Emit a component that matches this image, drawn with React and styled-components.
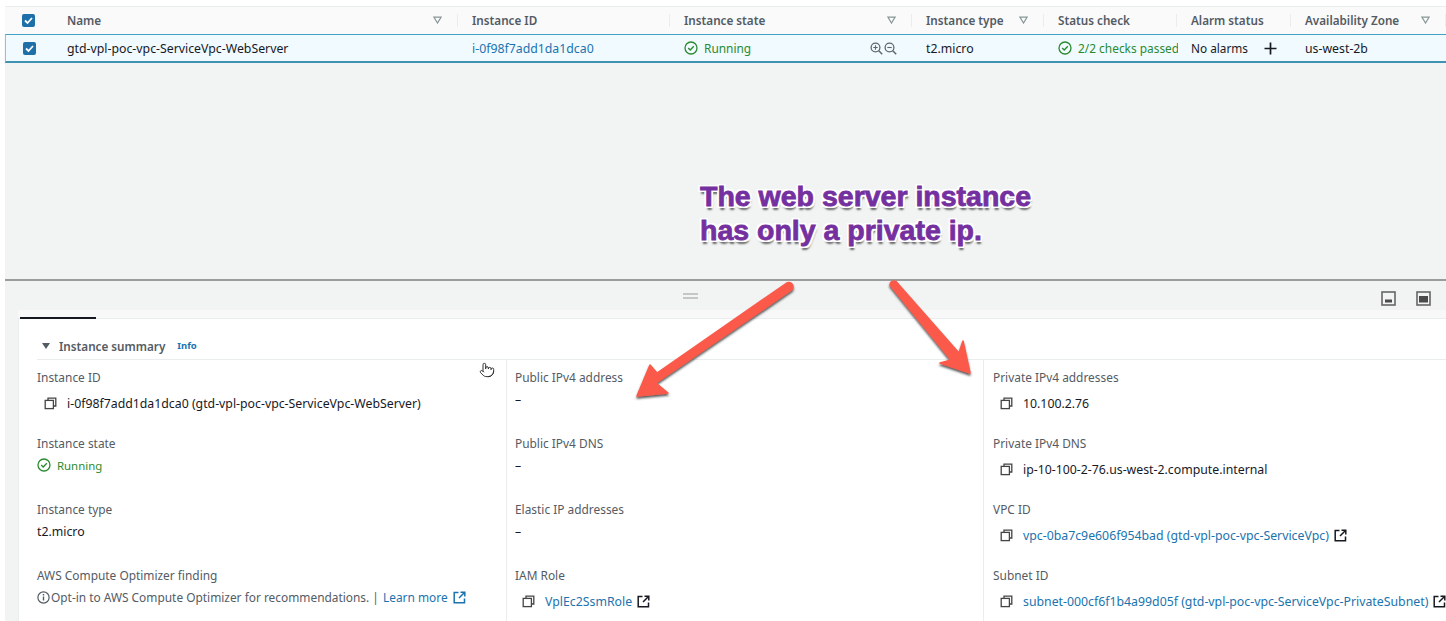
import React from 'react';
import styled, { createGlobalStyle } from 'styled-components';
import { Pointer } from 'lucide-react';

const GlobalStyle = createGlobalStyle`
  html, body { margin: 0; padding: 0; background: #fff; }
  body { font-family: "Noto Sans", "Open Sans", sans-serif; font-size: 12.3px; color: #16191f; }
`;

const Page = styled.div`
  position: relative;
  width: 1446px;
  height: 621px;
  overflow: hidden;
  padding: 6px 0 0 5px;
  box-sizing: border-box;
  display: flex;
  flex-direction: column;
  background: #fff;
`;

const columns = '48px 405px 212px 242px 132px 133px 114px 155px';

const HeaderRow = styled.div`
  display: grid;
  grid-template-columns: ${columns};
  height: 28px;
  padding-bottom: 1px;
  align-items: center;
  background: #fafafa;
  border-top: 1px solid #eaeded;
  box-sizing: border-box;
`;

const HeadCell = styled.div`
  position: relative;
  height: 100%;
  display: flex;
  align-items: center;
  justify-content: space-between;
  padding: 0 16px 0 14px;
  box-sizing: border-box;
  font-size: 11.7px;
  font-weight: 600;
  color: #545b64;
  white-space: nowrap;
  &:after {
    content: '';
    position: absolute;
    right: 0;
    top: 7px;
    height: 13px;
    border-right: 1px solid #eaeded;
  }
`;

const SelectedRow = styled.div`
  display: grid;
  grid-template-columns: ${columns};
  height: 29px;
  align-items: center;
  background: #f1faff;
  border-top: 1px solid #44a1c4;
  border-bottom: 2px solid #3f93b2;
  border-left: 1px solid #8fc4d8;
  box-sizing: border-box;
  box-shadow: 0 1px 1px #c7cccc;
`;

const Cell = styled.div`
  display: flex;
  align-items: center;
  justify-content: space-between;
  padding: 0 14px 0 13px;
  box-sizing: border-box;
  white-space: nowrap;
  overflow: hidden;
  gap: 4px;
`;

const CheckCell = styled(Cell)`
  padding: 0 0 0 17px;
  justify-content: flex-start;
`;

const AlarmCell = styled(Cell)`
  font-size: 11.8px;
  padding-right: 15px;
`;

const Check = styled.span`
  width: 13px;
  height: 13px;
  border-radius: 2px;
  background: #1f6fa8;
  display: flex;
  align-items: center;
  justify-content: center;
`;

const Link = styled.span`
  color: #1a73ae;
  white-space: nowrap;
`;

const Status = styled.span`
  display: inline-flex;
  align-items: center;
  gap: 6px;
  font-size: 11.9px;
  color: #2a8a2f;
  white-space: nowrap;
`;

const DetailStatus = styled(Status)`
  font-size: 11.4px;
`;

const ZoomGroup = styled.span`
  display: flex;
  gap: 1px;
  margin-right: 2px;
`;

const Gap = styled.div`
  height: 216px;
  background: #f2f3f3;
`;

const SplitPanel = styled.div`
  flex: 1;
  display: flex;
  flex-direction: column;
  background: #f2f3f3;
  border-top: 2px solid #9a9c9e;
  min-height: 0;
`;

const SplitBar = styled.div`
  height: 37px;
  flex: none;
  display: flex;
  align-items: flex-start;
  position: relative;
  padding: 10px 15px 0 0;
  box-sizing: border-box;
  justify-content: flex-end;
  gap: 20px;
`;

const Handle = styled.span`
  position: absolute;
  left: 678px;
  top: 12px;
  width: 15px;
  height: 6px;
  border-top: 2px solid #c4c6c8;
  border-bottom: 2px solid #c4c6c8;
  box-sizing: border-box;
`;

const Card = styled.div`
  flex: 1;
  margin-left: 13px;
  background: #fff;
  border-left: 1px solid #eaeded;
  border-top: 1px solid #eaeded;
  box-shadow: 0 -8px 0 #f8f8f8;
  position: relative;
`;

const TabMark = styled.div`
  position: absolute;
  left: 1px;
  top: -2px;
  width: 76px;
  height: 2px;
  background: #16191f;
`;

const SectionHead = styled.div`
  display: flex;
  align-items: center;
  height: 41px;
  margin-left: 18px;
  padding: 13px 0 0 5px;
  box-sizing: border-box;
  gap: 9px;
  border-bottom: 1px solid #eaeded;
  font-size: 11.7px;
  font-weight: 600;
  color: #545b64;
`;

const Caret = styled.span`
  width: 0;
  height: 0;
  border-left: 4px solid transparent;
  border-right: 4px solid transparent;
  border-top: 6px solid #545b64;
  margin-top: 1px;
`;

const InfoLink = styled.span`
  font-size: 9.5px;
  font-weight: 700;
  color: #1a73ae;
  margin-left: 3px;
`;

const Columns = styled.div`
  display: grid;
  grid-template-columns: 487px 477px 1fr;
`;

const Column = styled.div`
  position: relative;
  padding: 8px 0 0 ${(p) => p.$pad}px;
  border-left: ${(p) => (p.$first ? 'none' : '1px solid #eaeded')};
  height: 270px;
  box-sizing: border-box;
`;

const Field = styled.div`
  height: 66px;
`;

const Label = styled.div`
  height: 18px;
  line-height: 18px;
  font-size: 11.9px;
  color: #545b64;
`;

const Value = styled.div`
  display: flex;
  align-items: center;
  height: 22px;
  margin-top: ${(p) => (p.$copy ? 6 : 2)}px;
  padding-left: ${(p) => (p.$copy ? 7 : 0)}px;
  white-space: nowrap;
  gap: 5px;
  color: #16191f;
`;

const OptIn = styled(Value)`
  gap: 1px;
  font-size: 11.9px;
  color: #545b64;
`;

const CopySvg = styled.svg`
  flex: none;
  margin-right: 5px;
`;

const HandCursor = styled.div`
  position: absolute;
  left: 460px;
  top: 2px;
  color: #333;
`;

const Note = styled.div`
  position: absolute;
  left: 700px;
  top: 179px;
  font-family: "Liberation Sans", Arial, sans-serif;
  font-weight: 700;
  font-size: 28.5px;
  line-height: 34px;
  color: #7530a0;
  white-space: nowrap;
  -webkit-text-stroke: 0.8px #7530a0;
  text-shadow:
    -1px -1px 0 #fff, 1px -1px 0 #fff, -1px 1px 0 #fff, 1px 1px 0 #fff,
    0 -2px 0 #fff, 0 2px 0 #fff, -2px 0 0 #fff, 2px 0 0 #fff,
    2px 2px 0 #fff, -2px 2px 0 #fff, 2px -2px 0 #fff, -2px -2px 0 #fff,
    1px 4px 2px #666;
`;

const Arrows = styled.svg`
  position: absolute;
  left: 0;
  top: 0;
  pointer-events: none;
`;

const Sort = () => (
  <svg width="9" height="8" viewBox="0 0 9 8" style={{ flex: 'none' }}>
    <path d="M1 1.2h7L4.5 7z" fill="none" stroke="#879596" strokeWidth="1.2" />
  </svg>
);

const CheckBox = () => (
  <Check>
    <svg width="11" height="11" viewBox="0 0 11 11">
      <path d="M2 5.5l2.5 2.5L9 3" fill="none" stroke="#fff" strokeWidth="1.8" />
    </svg>
  </Check>
);

const OkIcon = () => (
  <svg width="14" height="14" viewBox="0 0 14 14" style={{ flex: 'none' }}>
    <circle cx="7" cy="7" r="6" fill="none" stroke="#2a8a2f" strokeWidth="1.3" />
    <path d="M4.2 7l2 2 3.6-3.8" fill="none" stroke="#2a8a2f" strokeWidth="1.3" />
  </svg>
);

const Copy = () => (
  <CopySvg width="13" height="13" viewBox="0 0 13 13">
    <path d="M4 3V1.2h7.8V9H10" fill="none" stroke="#444" strokeWidth="1.3" />
    <rect x="1.2" y="3.4" width="8.2" height="8.2" fill="none" stroke="#444" strokeWidth="1.3" />
  </CopySvg>
);

const External = ({ color = '#16191f' }) => (
  <svg width="13" height="13" viewBox="0 0 13 13" style={{ flex: 'none' }}>
    <path d="M5.5 1.5H1.2v10.3h10.3V7.5" fill="none" stroke={color} strokeWidth="1.5" />
    <path d="M7.5 1.2h4.3v4.3M11.5 1.5L6 7" fill="none" stroke={color} strokeWidth="1.5" />
  </svg>
);

const Zoom = ({ plus }) => (
  <svg width="13" height="13" viewBox="0 0 13 13">
    <circle cx="5.5" cy="5.5" r="4.4" fill="none" stroke="#5f666d" strokeWidth="1.3" />
    <path d="M8.8 8.8L12.2 12.2" stroke="#5f666d" strokeWidth="1.5" />
    <path d={plus ? 'M3.3 5.5h4.4M5.5 3.3v4.4' : 'M3.3 5.5h4.4'} stroke="#5f666d" strokeWidth="1.1" />
  </svg>
);

const PanelIcon = ({ tall }) => (
  <svg width="15" height="15" viewBox="0 0 15 15">
    <rect x="1" y="1" width="13" height="13" fill="none" stroke="#666" strokeWidth="1.6" />
    <rect x={tall ? 3 : 4} y={tall ? 5 : 8.5} width={tall ? 9 : 7} height={tall ? 6.5 : 3} fill="#4a4a4a" />
  </svg>
);

const InfoIcon = () => (
  <svg width="13" height="13" viewBox="0 0 13 13" style={{ flex: 'none' }}>
    <circle cx="6.5" cy="6.5" r="5.6" fill="none" stroke="#545b64" strokeWidth="1.2" />
    <path d="M6.5 5.5v4M6.5 3v1.4" stroke="#545b64" strokeWidth="1.4" />
  </svg>
);

const Arrow = ({ d }) => (
  <path d={d} fill="#fb5a4b" stroke="#fb5a4b" strokeWidth="1.5" strokeLinejoin="round" />
);

const App = () => (
  <Page>
    <GlobalStyle />
    <HeaderRow>
      <CheckCell><CheckBox /></CheckCell>
      <HeadCell>Name<Sort /></HeadCell>
      <HeadCell>Instance ID</HeadCell>
      <HeadCell>Instance state<Sort /></HeadCell>
      <HeadCell>Instance type<Sort /></HeadCell>
      <HeadCell>Status check</HeadCell>
      <HeadCell>Alarm status</HeadCell>
      <HeadCell>Availability Zone<Sort /></HeadCell>
    </HeaderRow>
    <SelectedRow>
      <CheckCell><CheckBox /></CheckCell>
      <Cell>gtd-vpl-poc-vpc-ServiceVpc-WebServer</Cell>
      <Cell><Link>i-0f98f7add1da1dca0</Link></Cell>
      <Cell>
        <Status><OkIcon />Running</Status>
        <ZoomGroup><Zoom plus /><Zoom /></ZoomGroup>
      </Cell>
      <Cell>t2.micro</Cell>
      <Cell><Status><OkIcon />2/2 checks passed</Status></Cell>
      <AlarmCell>
        No alarms
        <svg width="13" height="13" viewBox="0 0 13 13" style={{ flex: 'none' }}>
          <path d="M6.5 0.5v12M0.5 6.5h12" stroke="#16191f" strokeWidth="1.7" />
        </svg>
      </AlarmCell>
      <Cell>us-west-2b</Cell>
    </SelectedRow>
    <Gap />
    <SplitPanel>
      <SplitBar>
        <Handle />
        <PanelIcon />
        <PanelIcon tall />
      </SplitBar>
      <Card>
        <TabMark />
        <SectionHead>
          <Caret />
          Instance summary
          <InfoLink>Info</InfoLink>
        </SectionHead>
        <Columns>
          <Column $first $pad={18}>
            <HandCursor><Pointer size={16} strokeWidth={1.5} /></HandCursor>
            <Field>
              <Label>Instance ID</Label>
              <Value $copy><Copy />i-0f98f7add1da1dca0 (gtd-vpl-poc-vpc-ServiceVpc-WebServer)</Value>
            </Field>
            <Field>
              <Label>Instance state</Label>
              <Value><DetailStatus><OkIcon />Running</DetailStatus></Value>
            </Field>
            <Field>
              <Label>Instance type</Label>
              <Value>t2.micro</Value>
            </Field>
            <Field>
              <Label>AWS Compute Optimizer finding</Label>
              <OptIn>
                <InfoIcon />Opt-in to AWS Compute Optimizer for recommendations. |&nbsp;
                <Link>Learn more</Link>&nbsp;<External color="#1a73ae" />
              </OptIn>
            </Field>
          </Column>
          <Column $pad={8}>
            <Field>
              <Label>Public IPv4 address</Label>
              <Value>–</Value>
            </Field>
            <Field>
              <Label>Public IPv4 DNS</Label>
              <Value>–</Value>
            </Field>
            <Field>
              <Label>Elastic IP addresses</Label>
              <Value>–</Value>
            </Field>
            <Field>
              <Label>IAM Role</Label>
              <Value $copy><Copy /><Link>VplEc2SsmRole</Link><External /></Value>
            </Field>
          </Column>
          <Column $pad={9}>
            <Field>
              <Label>Private IPv4 addresses</Label>
              <Value $copy><Copy />10.100.2.76</Value>
            </Field>
            <Field>
              <Label>Private IPv4 DNS</Label>
              <Value $copy><Copy />ip-10-100-2-76.us-west-2.compute.internal</Value>
            </Field>
            <Field>
              <Label>VPC ID</Label>
              <Value $copy><Copy /><Link>vpc-0ba7c9e606f954bad (gtd-vpl-poc-vpc-ServiceVpc)</Link><External /></Value>
            </Field>
            <Field>
              <Label>Subnet ID</Label>
              <Value $copy><Copy /><Link>subnet-000cf6f1b4a99d05f (gtd-vpl-poc-vpc-ServiceVpc-PrivateSubnet)</Link><External /></Value>
            </Field>
          </Column>
        </Columns>
      </Card>
    </SplitPanel>
    <Note>The web server instance<br />has only a private ip.</Note>
    <Arrows width="1446" height="621" viewBox="0 0 1446 621">
      <defs>
        <filter id="arrowShadow" x="-20%" y="-20%" width="140%" height="140%">
          <feDropShadow dx="0" dy="2" stdDeviation="1" floodColor="#333" floodOpacity="0.8" />
        </filter>
      </defs>
      <g filter="url(#arrowShadow)">
        <Arrow d="M786 283.5 A4 4 0 0 1 791.5 290 L656 383 L668 393 L637 396 L650 365 L657 373 Z" />
        <Arrow d="M890 285 A4 4 0 0 1 896 281.5 L959 353 L963 341 L970 373 L940 363 L951 360 Z" />
      </g>
    </Arrows>
  </Page>
);

export default App;
